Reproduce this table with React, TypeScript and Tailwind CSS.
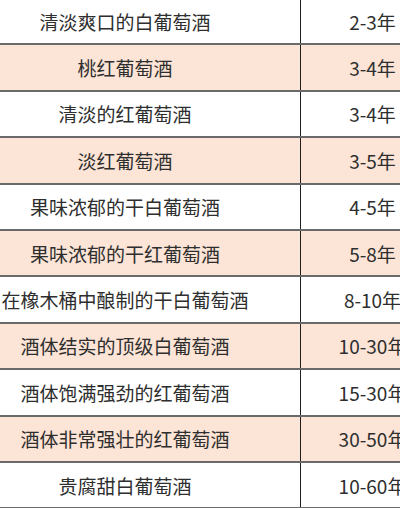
const rows: Array<[string, string]> = [
  ['清淡爽口的白葡萄酒', '2-3年'],
  ['桃红葡萄酒', '3-4年'],
  ['清淡的红葡萄酒', '3-4年'],
  ['淡红葡萄酒', '3-5年'],
  ['果味浓郁的干白葡萄酒', '4-5年'],
  ['果味浓郁的干红葡萄酒', '5-8年'],
  ['在橡木桶中酿制的干白葡萄酒', '8-10年'],
  ['酒体结实的顶级白葡萄酒', '10-30年'],
  ['酒体饱满强劲的红葡萄酒', '15-30年'],
  ['酒体非常强壮的红葡萄酒', '30-50年'],
  ['贵腐甜白葡萄酒', '10-60年'],
];

export default function App() {
  return (
    <div
      className="w-[400px] h-[508px] overflow-hidden bg-white text-[#2e2e2e]"
      style={{ fontFamily: '"Noto Sans CJK SC", "Noto Sans", sans-serif' }}
    >
      <div className="w-[494px] -ml-[50px] -mt-px">
        {rows.map(([name, years], i) => (
          <div
            key={name}
            className={`grid grid-cols-[350px_144px] h-[46.4px] border-b-2 border-[#6a6a6a] ${
              i % 2 === 1 ? 'bg-[#fce4d6]' : 'bg-white'
            }`}
          >
            <div className="flex items-center justify-center text-[19px] leading-none">{name}</div>
            <div className="flex items-center justify-center border-l border-[#1e1e1e] text-[19px] leading-none">
              {years}
            </div>
          </div>
        ))}
      </div>
    </div>
  );
}
